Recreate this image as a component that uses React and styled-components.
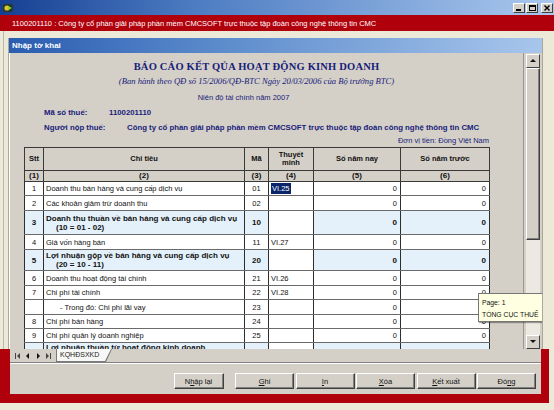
import React from 'react';
import styled, { createGlobalStyle } from 'styled-components';

const GlobalStyle = createGlobalStyle`
  html, body { margin: 0; padding: 0; background: #ece9d8; }
  body { font-family: "Liberation Sans", Arial, sans-serif; }
`;

const RED = '#b0000c';
const PANEL = '#d4d0c8';
const NAVY = '#17207a';

const Window = styled.div`
  width: 554px;
  height: 410px;
  display: flex;
  flex-direction: column;
  overflow: hidden;
  background: #ece9d8;
`;

const TitleBar = styled.div`
  height: 15px;
  flex-shrink: 0;
  display: flex;
  align-items: center;
  padding: 0 1px 0 3px;
  background: linear-gradient(90deg, #163f92 0%, #4d7cc2 35%, #aac8ee 100%);
`;

const WinButtons = styled.div`
  margin-left: auto;
  display: flex;
  gap: 1px;
`;

const WinButton = styled.div`
  width: 12px;
  height: 10px;
  box-sizing: border-box;
  display: flex;
  align-items: center;
  justify-content: center;
  background: ${PANEL};
  border: 1px solid;
  border-color: #fff #404040 #404040 #fff;
  margin-left: ${({ $gap }) => ($gap ? '2px' : '0')};
`;

const CompanyBar = styled.div`
  height: 16px;
  flex-shrink: 0;
  display: flex;
  align-items: center;
  padding-left: 12px;
  background: ${RED};
  color: #fff;
  font-size: 7.5px;
  white-space: nowrap;
`;

const Body = styled.div`
  flex: 1;
  display: flex;
  flex-direction: column;
  background: ${RED};
  border-right: 5px solid #ece9d8;
  border-bottom: 7px solid #ece9d8;
`;

const UpperFrame = styled.div`
  padding: 7px 6px 0 8px;
  background: linear-gradient(90deg, #ece9d8 3px, #bdb9a9 3px, #bdb9a9 4px, #ece9d8 4px);
`;

const ChildWin = styled.div`
  display: flex;
  flex-direction: column;
  border-left: 1px solid #aca899;
  border-right: 1px solid #aca899;
`;

const ChildTitle = styled.div`
  height: 15px;
  display: flex;
  align-items: center;
  padding-left: 3px;
  background: linear-gradient(90deg, #2a5cb0 0%, #5d8ccc 40%, #a8c6ec 100%);
  color: #fff;
  font-weight: bold;
  font-size: 8px;
`;

const Content = styled.div`
  height: 296px;
  display: flex;
  position: relative;
  overflow: hidden;
  background: ${PANEL};
  border-left: 1px solid #fff;
`;

const FormArea = styled.div`
  flex: 1;
  overflow: hidden;
  padding-left: 14px;
  border-right: 1px solid #9a978e;
`;

const Form = styled.div`
  width: 465px;
  display: flex;
  flex-direction: column;
`;

const ReportTitle = styled.div`
  margin-top: 8px;
  line-height: 12px;
  text-align: center;
  font-family: "Liberation Serif", "Times New Roman", serif;
  font-weight: bold;
  font-size: 10.5px;
  letter-spacing: 0.2px;
  color: ${NAVY};
`;

const SubTitle = styled.div`
  margin-top: 3px;
  line-height: 11px;
  text-align: center;
  font-family: "Liberation Serif", "Times New Roman", serif;
  font-style: italic;
  font-size: 8.6px;
  color: ${NAVY};
`;

const Year = styled.div`
  margin-top: 5px;
  line-height: 11px;
  text-align: center;
  padding-right: 26px;
  font-size: 7.5px;
  color: ${NAVY};
`;

const InfoRow = styled.div`
  margin-top: ${({ $mt }) => $mt}px;
  line-height: 12px;
  display: flex;
  padding-left: 20px;
  font-weight: bold;
  font-size: 7.8px;
  color: ${NAVY};
  white-space: nowrap;
`;

const InfoLabel = styled.span`
  width: ${({ $w }) => $w}px;
  flex-shrink: 0;
`;

const Unit = styled.div`
  margin-top: 1px;
  line-height: 12px;
  text-align: right;
  font-size: 7.5px;
  color: ${NAVY};
`;

const Table = styled.table`
  width: 465px;
  border-collapse: collapse;
  table-layout: fixed;
  font-size: 7.5px;
  color: #111;
`;

const Th = styled.th`
  height: ${({ $h }) => $h}px;
  padding: 0;
  background: ${PANEL};
  border: 1px solid #3a3a3a;
  font-weight: bold;
  font-size: ${({ $num }) => ($num ? '8px' : '7.5px')};
  line-height: 8px;
  text-align: center;
  vertical-align: middle;
`;

const Tr = styled.tr`
  height: ${({ $h }) => $h}px;
`;

const Td = styled.td`
  padding: 0 ${({ $pr }) => $pr || 2}px 0 2px;
  background: ${({ $total, $plain }) => ($total && !$plain ? '#e4f1fb' : '#fff')};
  border-top: 1px solid #6a6a6a;
  border-bottom: 1px solid #6a6a6a;
  border-left: 1px solid #2e2e2e;
  border-right: 1px solid #2e2e2e;
  font-weight: ${({ $total }) => ($total ? 'bold' : 'normal')};
  font-size: ${({ $total }) => ($total ? '8px' : '7.5px')};
  text-align: ${({ $align }) => $align || 'left'};
  vertical-align: ${({ $top }) => ($top ? 'top' : 'middle')};
  white-space: nowrap;
  overflow: hidden;
  line-height: 9px;
`;

const SubLine = styled.div`
  padding-left: 10px;
`;

const Indent = styled.span`
  padding-left: 14px;
`;

const Selected = styled.span`
  background: #0a246a;
  color: #fff;
  padding: 1px 1px;
`;

const Scrollbar = styled.div`
  width: 14px;
  margin: 1px 2px 0 2px;
  display: flex;
  flex-direction: column;
  background: #ebe9e2;
`;

const ScrollBtn = styled.div`
  height: 14px;
  box-sizing: border-box;
  display: flex;
  align-items: center;
  justify-content: center;
  background: ${PANEL};
  border: 1px solid;
  border-color: #fff #404040 #404040 #fff;
  margin-top: ${({ $bottom }) => ($bottom ? 'auto' : '0')};
`;

const Thumb = styled.div`
  height: 172px;
  box-sizing: border-box;
  background: ${PANEL};
  border: 1px solid;
  border-color: #fff #404040 #404040 #fff;
  box-shadow: inset -1px -1px 0 #808080;
`;

const Tooltip = styled.div`
  position: absolute;
  left: 468px;
  top: 240px;
  height: 29px;
  box-sizing: border-box;
  padding: 3px 3px 0 3px;
  background: #ffffe1;
  border: 1px solid #767676;
  box-shadow: 1px 1px 1px rgba(0, 0, 0, 0.35);
  font-size: 6.8px;
  line-height: 12px;
  color: #111;
  white-space: nowrap;
`;

const LowerArea = styled.div`
  margin: 0 8px 0 10px;
  display: flex;
  flex-direction: column;
`;

const TabBar = styled.div`
  height: 13px;
  display: flex;
  align-items: center;
  padding-left: 3px;
  background: ${PANEL};
  border-bottom: 1px solid #808080;
`;

const NavBtn = styled.div`
  width: 10px;
  height: 10px;
  display: flex;
  align-items: center;
  justify-content: center;
`;

const TabOuter = styled.div`
  margin-left: 3px;
  height: 13px;
  width: 56px;
  background: #7a7a7a;
  clip-path: polygon(0 0, 100% 0, calc(100% - 6px) 100%, 0 100%);
  display: flex;
`;

const TabInner = styled.div`
  flex: 1;
  margin: 0 1px 1px 1px;
  background: #f7f7f5;
  clip-path: polygon(0 0, 100% 0, calc(100% - 6px) 100%, 0 100%);
  font-size: 7px;
  line-height: 12px;
  padding-left: 3px;
  color: #222;
  white-space: nowrap;
`;

const ButtonPanel = styled.div`
  height: 31px;
  box-sizing: border-box;
  display: flex;
  justify-content: flex-end;
  align-items: flex-start;
  padding: 9px 5px 0 0;
  gap: 1.5px;
  background: ${PANEL};
  border-top: 1px solid #fff;
`;

const Button = styled.div`
  width: ${({ $w }) => $w || 59}px;
  height: 16px;
  margin-right: ${({ $mr }) => $mr || 0}px;
  box-sizing: border-box;
  display: flex;
  align-items: center;
  justify-content: center;
  background: ${PANEL};
  border: 1px solid;
  border-color: #fff #404040 #404040 #fff;
  box-shadow: inset -1px -1px 0 #808080;
  font-size: 7.5px;
  color: #111;
  u { text-decoration: underline; }
`;

const rows = [
  { stt: '1', name: 'Doanh thu bán hàng và cung cấp dịch vụ', ma: '01', tm: 'VI.25', sel: true, h: 14 },
  { stt: '2', name: 'Các khoản giảm trừ doanh thu', ma: '02', h: 15 },
  { stt: '3', name: 'Doanh thu thuần về bán hàng và cung cấp dịch vụ', sub: '(10 = 01 - 02)', ma: '10', total: true, h: 24 },
  { stt: '4', name: 'Giá vốn hàng bán', ma: '11', tm: 'VI.27', h: 15 },
  { stt: '5', name: 'Lợi nhuận gộp về bán hàng và cung cấp dịch vụ', sub: '(20 = 10 - 11)', ma: '20', total: true, h: 21 },
  { stt: '6', name: 'Doanh thu hoạt động tài chính', ma: '21', tm: 'VI.26', h: 15 },
  { stt: '7', name: 'Chi phí tài chính', ma: '22', tm: 'VI.28', h: 14 },
  { stt: '', name: '- Trong đó: Chi phí lãi vay', indent: true, ma: '23', h: 15 },
  { stt: '8', name: 'Chi phí bán hàng', ma: '24', h: 14 },
  { stt: '9', name: 'Chi phí quản lý doanh nghiệp', ma: '25', h: 14 },
  { stt: '10', name: 'Lợi nhuận thuần từ hoạt động kinh doanh', ma: '30', total: true, top: true, h: 24 },
];

const Tri = ({ dir = 'up' }) => {
  const pts = {
    up: '1,5 4,2 7,5',
    down: '1,2 4,5 7,2',
    left: '5,1 2,4 5,7',
    right: '3,1 6,4 3,7',
  }[dir];
  return (
    <svg width="8" height="8" viewBox="0 0 8 8">
      <polygon points={pts} fill="#111" />
    </svg>
  );
};

const EdgeNav = ({ dir }) => (
  <svg width="8" height="8" viewBox="0 0 8 8">
    {dir === 'left' ? (
      <>
        <rect x="1" y="1" width="1" height="6" fill="#444" />
        <polygon points="6,1 3,4 6,7" fill="#444" />
      </>
    ) : (
      <>
        <polygon points="2,1 5,4 2,7" fill="#444" />
        <rect x="6" y="1" width="1" height="6" fill="#444" />
      </>
    )}
  </svg>
);

const AppIcon = () => (
  <svg width="10" height="10" viewBox="0 0 10 10">
    <rect x="0" y="1" width="10" height="8" rx="2" fill="#233a2a" />
    <circle cx="4" cy="5" r="2.6" fill="#e3c52a" />
    <path d="M5 3 L9 5 L5 7 Z" fill="#8ccf3a" />
  </svg>
);

const App = () => {
  return (
    <>
      <GlobalStyle />
      <Window>
        <TitleBar>
          <AppIcon />
          <WinButtons>
            <WinButton>
              <svg width="6" height="6" viewBox="0 0 6 6"><rect x="0" y="4" width="5" height="2" fill="#000" /></svg>
            </WinButton>
            <WinButton>
              <svg width="7" height="6" viewBox="0 0 7 6"><rect x="0.5" y="0.5" width="6" height="5" fill="none" stroke="#000" /><rect x="0" y="0" width="7" height="2" fill="#000" /></svg>
            </WinButton>
            <WinButton $gap>
              <svg width="6" height="6" viewBox="0 0 6 6"><path d="M0.5 0.5 L5.5 5.5 M5.5 0.5 L0.5 5.5" stroke="#000" strokeWidth="1.4" /></svg>
            </WinButton>
          </WinButtons>
        </TitleBar>

        <CompanyBar>
          1100201110 : Công ty cổ phần giải pháp phần mềm CMCSOFT trực thuộc tập đoàn công nghệ thông tin CMC
        </CompanyBar>

        <Body>
          <UpperFrame>
            <ChildWin>
              <ChildTitle>Nhập tờ khai</ChildTitle>
              <Content>
                <FormArea>
                  <Form>
                    <ReportTitle>BÁO CÁO KẾT QỦA HOẠT ĐỘNG KINH DOANH</ReportTitle>
                    <SubTitle>(Ban hành theo QĐ số 15/2006/QĐ-BTC Ngày 20/03/2006 của Bộ trưởng BTC)</SubTitle>
                    <Year>Niên độ tài chính năm 2007</Year>
                    <InfoRow $mt={4}>
                      <InfoLabel $w={65}>Mã số thuế:</InfoLabel>
                      <span>1100201110</span>
                    </InfoRow>
                    <InfoRow $mt={3}>
                      <InfoLabel $w={83}>Người nộp thuế:</InfoLabel>
                      <span>Công ty cổ phần giải pháp phần mềm CMCSOFT trực thuộc tập đoàn công nghệ thông tin CMC</span>
                    </InfoRow>
                    <Unit>Đơn vị tiền: Đồng Việt Nam</Unit>
                    <Table>
                      <colgroup>
                        <col style={{ width: 19 }} />
                        <col style={{ width: 201 }} />
                        <col style={{ width: 24 }} />
                        <col style={{ width: 45 }} />
                        <col style={{ width: 87 }} />
                        <col style={{ width: 89 }} />
                      </colgroup>
                      <thead>
                        <tr>
                          <Th $h={22}>Stt</Th>
                          <Th $h={22}>Chỉ tiêu</Th>
                          <Th $h={22}>Mã</Th>
                          <Th $h={22}>Thuyết<br />minh</Th>
                          <Th $h={22}>Số năm nay</Th>
                          <Th $h={22}>Số năm trước</Th>
                        </tr>
                        <tr>
                          {['(1)', '(2)', '(3)', '(4)', '(5)', '(6)'].map((n) => (
                            <Th key={n} $h={10} $num>{n}</Th>
                          ))}
                        </tr>
                      </thead>
                      <tbody>
                        {rows.map((r, i) => (
                          <Tr key={i} $h={r.h}>
                            <Td $total={r.total} $align="center">{r.stt}</Td>
                            <Td $total={r.total} $top={r.top}>
                              {r.indent ? <Indent>{r.name}</Indent> : r.name}
                              {r.sub && <SubLine>{r.sub}</SubLine>}
                            </Td>
                            <Td $total={r.total} $align="center">{r.ma}</Td>
                            <Td $plain $total={false}>
                              {r.sel ? <Selected>{r.tm}</Selected> : r.tm}
                            </Td>
                            <Td $total={r.total} $align="right" $pr={3}>0</Td>
                            <Td $total={r.total} $align="right" $pr={3}>0</Td>
                          </Tr>
                        ))}
                      </tbody>
                    </Table>
                  </Form>
                </FormArea>
                <Scrollbar>
                  <ScrollBtn><Tri dir="up" /></ScrollBtn>
                  <Thumb />
                  <ScrollBtn $bottom><Tri dir="down" /></ScrollBtn>
                </Scrollbar>
                <Tooltip>
                  Page: 1<br />
                  TỔNG CỤC THUẾ
                </Tooltip>
              </Content>
            </ChildWin>
          </UpperFrame>

          <LowerArea>
            <TabBar>
              <NavBtn><EdgeNav dir="left" /></NavBtn>
              <NavBtn><Tri dir="left" /></NavBtn>
              <NavBtn><Tri dir="right" /></NavBtn>
              <NavBtn><EdgeNav dir="right" /></NavBtn>
              <TabOuter><TabInner>KQHĐSXKD</TabInner></TabOuter>
            </TabBar>
            <ButtonPanel>
              <Button $w={50} $mr={10}>N<u>h</u>ập lại</Button>
              <Button><u>G</u>hi</Button>
              <Button><u>I</u>n</Button>
              <Button><u>X</u>óa</Button>
              <Button><u>K</u>ết xuất</Button>
              <Button>Đó<u>n</u>g</Button>
            </ButtonPanel>
          </LowerArea>
        </Body>
      </Window>
    </>
  );
};

export default App;
